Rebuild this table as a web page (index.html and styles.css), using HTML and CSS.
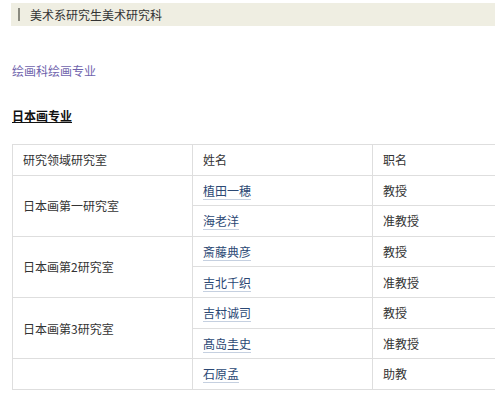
FILE: index.html
```html
<!DOCTYPE html>
<html lang="zh">
<head>
<meta charset="utf-8">
<title>日本画专业</title>
<link rel="stylesheet" href="styles.css">
</head>
<body>
<div class="page">
  <div class="crumb"><span class="crumb-mark"></span><span class="crumb-text">美术系研究生美术研究科</span></div>
  <a class="dept" href="#">绘画科绘画专业</a>
  <h2 class="major"><a href="#">日本画专业</a></h2>
  <table class="staff">
    <colgroup><col class="c"><col class="c"><col class="c"></colgroup>
    <tr class="head"><th>研究领域研究室</th><th>姓名</th><th>职名</th></tr>
    <tr><td rowspan="2">日本画第一研究室</td><td><a href="#">植田一穂</a></td><td>教授</td></tr>
    <tr><td><a href="#">海老洋</a></td><td>准教授</td></tr>
    <tr><td rowspan="2">日本画第2研究室</td><td><a href="#">斎藤典彦</a></td><td>教授</td></tr>
    <tr><td><a href="#">吉北千织</a></td><td>准教授</td></tr>
    <tr><td rowspan="2">日本画第3研究室</td><td><a href="#">吉村诚司</a></td><td>教授</td></tr>
    <tr><td><a href="#">髙岛圭史</a></td><td>准教授</td></tr>
    <tr><td></td><td><a href="#">石原孟</a></td><td>助教</td></tr>
  </table>
</div>
</body>
</html>
```

FILE: styles.css
```css
html, body {
  margin: 0;
  padding: 0;
  background: #fff;
}
body {
  font-family: "Noto Sans CJK SC", "Noto Sans", sans-serif;
  font-size: 12px;
  color: #333;
}
.page {
  width: 495px;
  overflow: hidden;
  padding-top: 3px;
}
.crumb {
  margin-left: 11px;
  height: 23px;
  background: #efeee2;
  display: flex;
  align-items: center;
}
.crumb-mark {
  width: 2px;
  height: 13px;
  background: #8a8a80;
  margin-left: 7px;
  margin-right: 10px;
}
.crumb-text {
  color: #333;
  font-size: 12px;
}
.dept {
  display: block;
  margin: 36px 0 0 12px;
  color: #6f63ad;
  text-decoration: none;
  line-height: 18px;
  width: max-content;
}
.major {
  margin: 27px 0 0 12px;
  font-size: 12px;
  font-weight: bold;
  line-height: 18px;
}
.major a {
  color: #111;
  text-decoration: underline;
}
.staff {
  margin: 19px 0 0 12px;
  border-collapse: collapse;
  width: 540px;
  table-layout: fixed;
}
.staff .c {
  width: 180px;
}
.staff th, .staff td {
  border: 1px solid #dedede;
  padding: 0 10px;
  height: 29.6px;
  text-align: left;
  font-weight: normal;
  color: #333;
  vertical-align: middle;
}
.staff a {
  color: #2b4874;
  text-decoration: none;
  border-bottom: 1px solid #c5d0e0;
}
```
